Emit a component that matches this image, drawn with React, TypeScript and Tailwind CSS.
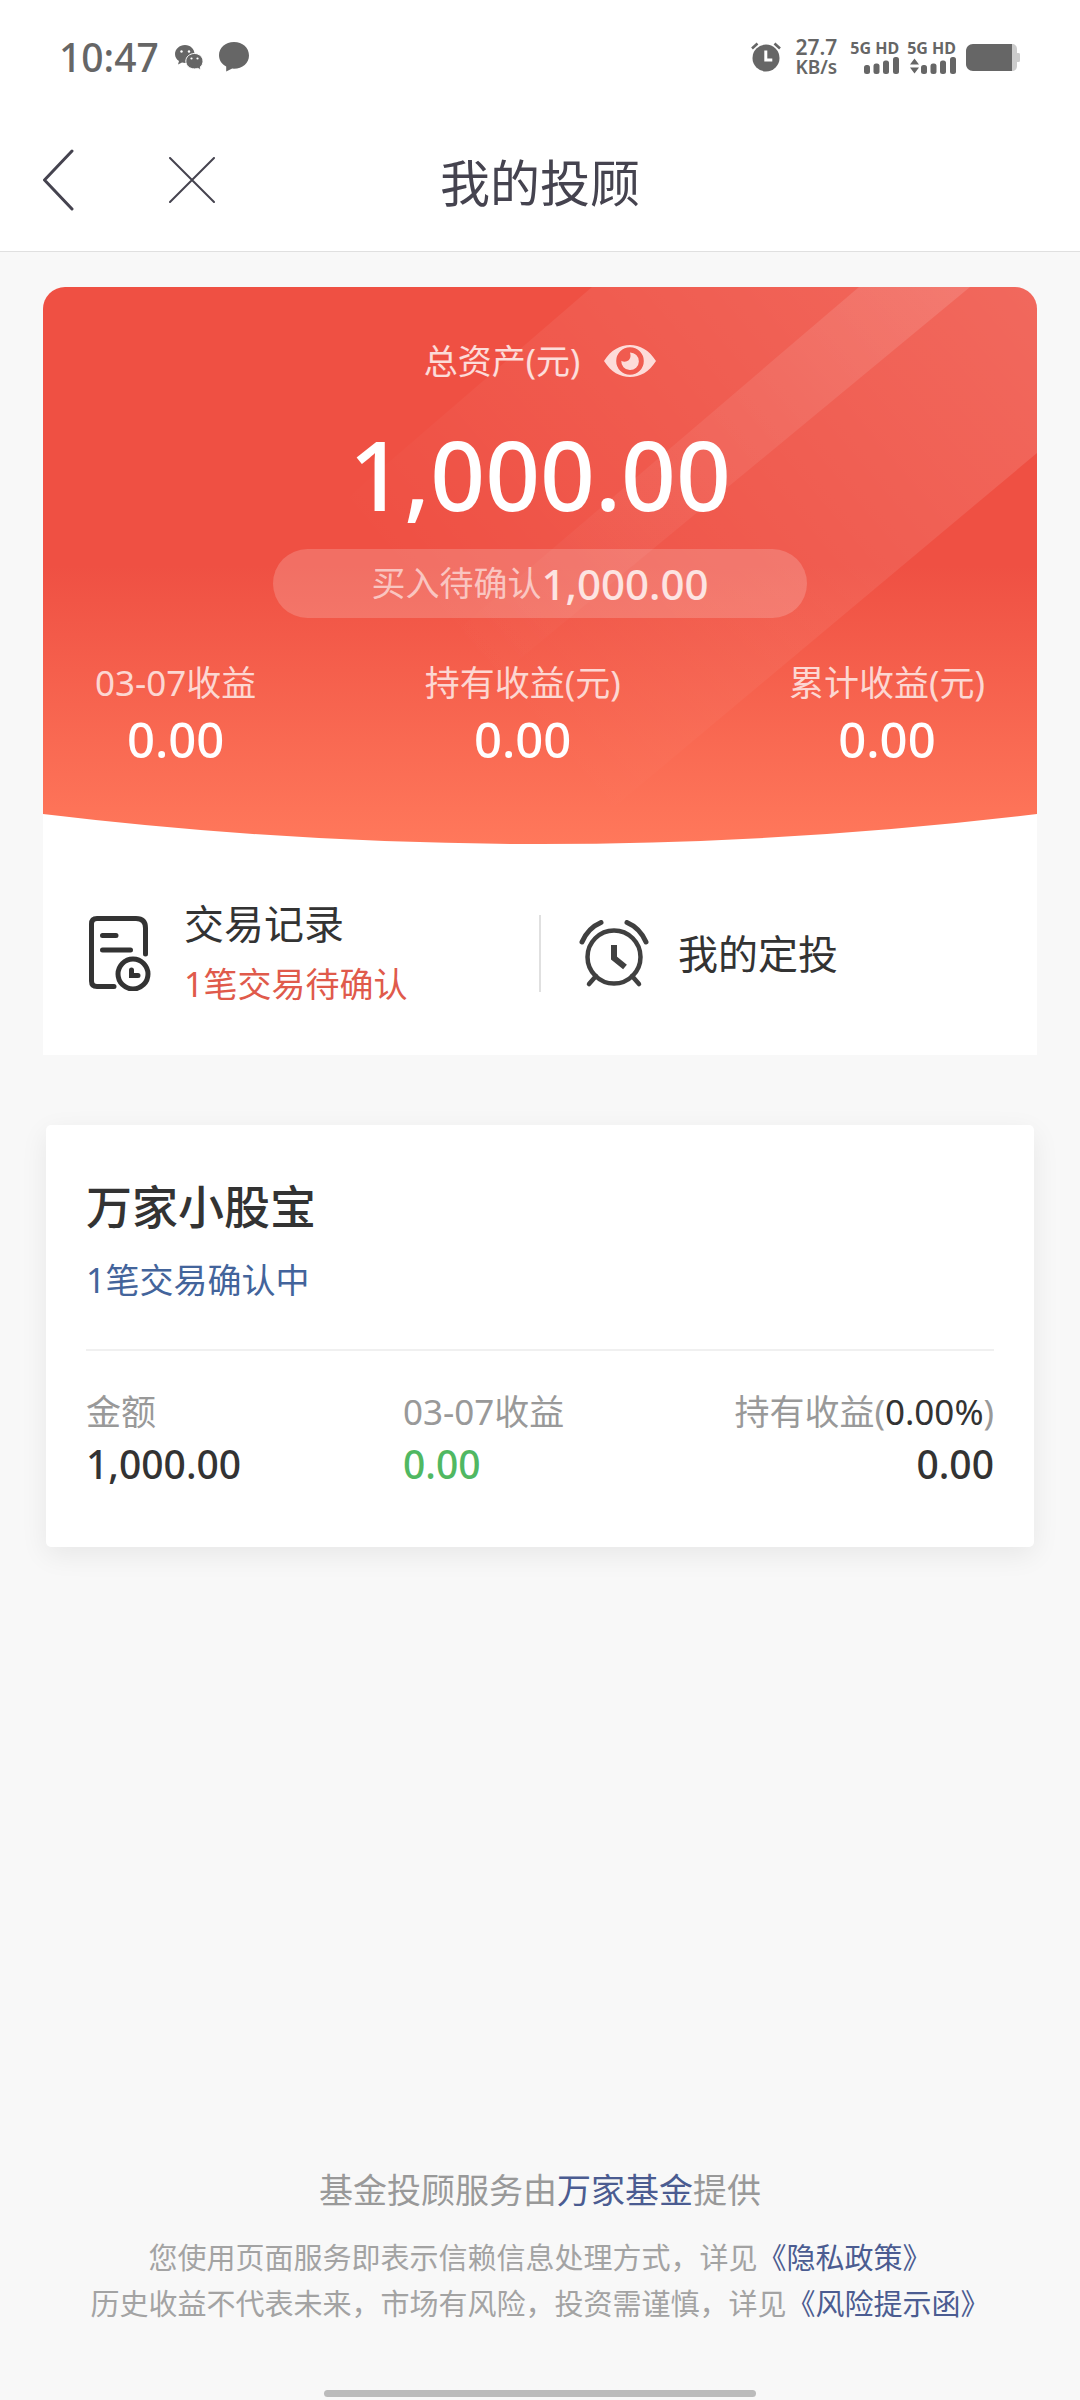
import type { ReactNode } from "react";

interface Stat {
  label: string;
  value: string;
}

const SUMMARY: Stat[] = [
  { label: "03-07收益", value: "0.00" },
  { label: "持有收益(元)", value: "0.00" },
  { label: "累计收益(元)", value: "0.00" },
];

function WechatIcon() {
  return (
    <svg className="ml-4 h-[25px] w-7" viewBox="0 0 28 25" aria-hidden="true">
      <path
        d="M10 0C4.500 0 0 4 0 9c0 3 1.500 5.500 4 7l-1 3.500 4-2c1 .3 2 .4 3 .4C15.500 18 19.500 14 19.500 9S15.500 0 10 0z"
        fill="#666"
      />
      <path
        d="M19.500 8.500c-5 0-8.700 3.400-8.700 7.700s3.700 7.700 8.700 7.700c1.200 0 2.200-.2 3.200-.5l3.300 1.500-.7-2.900c1.700-1.400 2.700-3.500 2.700-5.800 0-4.300-3.700-7.700-8.500-7.700z"
        fill="#666"
        stroke="#fff"
        strokeWidth="1"
      />
      <g fill="#fff">
        <circle cx="6.500" cy="6.500" r="1.200" />
        <circle cx="14" cy="6.500" r="1.200" />
        <circle cx="16.500" cy="13.500" r="1.100" />
        <circle cx="22.500" cy="13.500" r="1.100" />
      </g>
    </svg>
  );
}

function BubbleIcon() {
  return (
    <svg className="ml-4 h-[30px] w-[30px]" viewBox="0 0 30 30" aria-hidden="true">
      <path
        d="M15 0C6.500 0 0 5.700 0 13.300c0 5 2.800 9 7.200 11.300V29.500l6-2.900 1.800.1c8.500 0 15-5.700 15-13.300S23.500 0 15 0z"
        fill="#666"
      />
    </svg>
  );
}

function SmallAlarmIcon() {
  return (
    <svg className="h-[30px] w-[30px]" viewBox="0 0 30 30" aria-hidden="true">
      <circle cx="15" cy="16" r="13.500" fill="#666" />
      <path d="M1 6.500L6.500 1.500M29 6.500L23.500 1.500" stroke="#666" strokeWidth="2.600" />
      <path d="M14.800 8.500v9.500h6.500" fill="none" stroke="#fff" strokeWidth="3" />
    </svg>
  );
}

function Signal({ arrows = false }: { arrows?: boolean }) {
  return (
    <div className="flex flex-col items-end">
      <span className="text-[16px] leading-[17px] font-bold">5G HD</span>
      <svg className="h-[17px] w-[47px]" viewBox="0 0 47 17" fill="#666" aria-hidden="true">
        {arrows && <path d="M1 7.500L5.500 1.500 10 7.500zM1 10.500h9L5.500 16.500z" />}
        <rect x="12" y="8" width="6" height="9" rx="2.500" />
        <rect x="21.500" y="6.500" width="6" height="10.500" rx="2.500" />
        <rect x="31" y="3.500" width="6" height="13.500" rx="2.500" />
        <rect x="41" y="0" width="6" height="17" rx="2.500" />
      </svg>
    </div>
  );
}

function BatteryIcon() {
  return (
    <svg className="ml-[10px] h-[27px] w-[54px]" viewBox="0 0 54 27" aria-hidden="true">
      <path d="M46 0c3 0 5 2 5 5v4h1.500c1 0 1.500.7 1.500 1.500v6c0 .8-.5 1.500-1.500 1.500H51v4c0 3-2 5-5 5z" fill="#ccc" />
      <path d="M46 0v27H7c-4 0-7-3-7-7V7c0-4 3-7 7-7z" fill="#666" />
    </svg>
  );
}

function StatusBar() {
  return (
    <div className="flex h-[114px] items-center pr-[60px] pl-[59px] text-[#666]">
      <span className="text-[39px] leading-[48px] font-medium">10:47</span>
      <WechatIcon />
      <BubbleIcon />
      <div className="ml-auto flex items-center">
        <SmallAlarmIcon />
        <div className="ml-[14px] flex flex-col">
          <span className="text-[21px] leading-[20px] font-semibold">27.7</span>
          <span className="text-[19px] leading-[20px] font-semibold">KB/s</span>
        </div>
        <div className="ml-[13px] flex gap-[8px]">
          <Signal />
          <Signal arrows />
        </div>
        <BatteryIcon />
      </div>
    </div>
  );
}

function NavBar() {
  return (
    <header className="grid h-[138px] grid-cols-[1fr_auto_1fr] items-center border-b border-[#e0e0e0]">
      <div className="flex items-center gap-[95px] pb-[6px] pl-[42px]">
        <button type="button" aria-label="返回">
          <svg className="h-[62px] w-8" viewBox="0 0 32 62" fill="none" stroke="#45434f" strokeWidth="3" strokeLinecap="round" strokeLinejoin="round">
            <path d="M30 2L2.500 31 30 60" />
          </svg>
        </button>
        <button type="button" aria-label="关闭">
          <svg className="h-[46px] w-[46px]" viewBox="0 0 46 46" fill="none" stroke="#45434f" strokeWidth="2" strokeLinecap="round">
            <path d="M1 1l44 44M45 1L1 45" />
          </svg>
        </button>
      </div>
      <h1 className="text-[50px] leading-[64px] text-[#45434f]">我的投顾</h1>
    </header>
  );
}

// Red backdrop: vertical gradient, two light beams and a curved lower edge
function AssetBackdrop() {
  return (
    <svg
      className="absolute inset-0 h-full w-full"
      viewBox="0 0 994 557"
      preserveAspectRatio="none"
      aria-hidden="true"
    >
      <defs>
        <linearGradient id="base" x1="0" y1="0" x2="0" y2="1">
          <stop offset="0.500" stopColor="#ef5043" />
          <stop offset="1" stopColor="#ff785b" />
        </linearGradient>
        <linearGradient id="beam" gradientUnits="userSpaceOnUse" x1="994" y1="0" x2="480" y2="436">
          <stop offset="0" stopColor="#fff" stopOpacity="0.140" />
          <stop offset="1" stopColor="#fff" stopOpacity="0" />
        </linearGradient>
        <clipPath id="curve">
          <path d="M0 0H994V527Q497 587 0 527z" />
        </clipPath>
      </defs>
      <g clipPath="url(#curve)">
        <rect width="994" height="557" fill="url(#base)" />
        <path d="M549 0H994V166L527 557H-97z" fill="url(#beam)" />
        <path d="M816 0H927L253 557H164z" fill="url(#beam)" />
      </g>
    </svg>
  );
}

function EyeIcon() {
  return (
    <svg className="h-8 w-[52px]" viewBox="0 0 52 32" aria-hidden="true">
      <path
        fillRule="evenodd"
        d="M0 16C7 5 16 0 26 0s19 5 26 16C45 27 36 32 26 32S7 27 0 16zM26 2.200a13.800 13.800 0 1 0 0 27.600 13.800 13.800 0 0 0 0-27.600z"
        fill="#fddcd9"
      />
      <path d="M26 7.500a8.800 8.800 0 1 1-8.700 8.200c1.500 1 3.500 1.300 5.500.6 3-1 4.600-4.200 3.200-8.800z" fill="#fddcd9" />
    </svg>
  );
}

function AssetPanel() {
  return (
    <div className="relative">
      <AssetBackdrop />
      <div className="relative flex flex-col items-center pt-[50px] pb-[77px] text-white">
        <div className="flex items-center gap-6 text-[34px] leading-[48px] text-white/80">
          <span>总资产(元)</span>
          <button type="button" aria-label="隐藏金额">
            <EyeIcon />
          </button>
        </div>
        <p className="mt-[34px] text-[96px] leading-[110px] font-medium">1,000.00</p>
        <button
          type="button"
          className="mt-[20px] flex h-[69px] w-[534px] items-center justify-center rounded-full bg-white/18"
        >
          <span className="text-[34px] text-white/60">买入待确认</span>
          <span className="text-[42px] font-medium text-white/80">1,000.00</span>
        </button>
        <div className="mt-[41px] flex w-full justify-between px-[52px]">
          {SUMMARY.map((item) => (
            <div key={item.label} className="text-center">
              <p className="text-[35px] leading-[48px] text-white/75">{item.label}</p>
              <p className="mt-1 text-[49px] leading-[56px] font-medium">{item.value}</p>
            </div>
          ))}
        </div>
      </div>
    </div>
  );
}

function RecordIcon() {
  return (
    <svg className="h-[75px] w-[62px]" viewBox="0 0 62 75" fill="none" stroke="#333" strokeWidth="5" strokeLinecap="round" aria-hidden="true">
      <path d="M25 70.500H8Q2.500 70.500 2.500 65V8Q2.500 2.500 8 2.500H47Q56.500 2.500 56.500 12V38" />
      <path d="M13.500 19.500H27M13.500 34H41.500" />
      <circle cx="44" cy="58" r="15" />
      <path d="M42.500 54v5.500H49" />
    </svg>
  );
}

function AlarmIcon() {
  return (
    <svg className="h-[68px] w-[70px]" viewBox="0 0 70 68" fill="none" stroke="#404040" strokeWidth="4.500" strokeLinecap="round" aria-hidden="true">
      <circle cx="35" cy="37" r="26.500" />
      <path d="M35 25v13l11 9" strokeWidth="6" strokeLinecap="butt" />
      <path d="M3 22Q9 8 22 2.500M67 22Q61 8 48 2.500" strokeWidth="5" />
      <path d="M17 56l-7 8M53 56l7 8" />
    </svg>
  );
}

function ActionRow() {
  return (
    <div className="grid grid-cols-[1fr_2px_1fr] items-center pt-2">
      <button type="button" className="flex h-[203px] items-center gap-[33px] pl-[46px] text-left">
        <RecordIcon />
        <span className="flex flex-col leading-[60px]">
          <span className="text-[40px] text-[#333]">交易记录</span>
          <span className="text-[34px] text-[#e05a4b]">1笔交易待确认</span>
        </span>
      </button>
      <div className="h-[77px] bg-[#e0e0e0]" />
      <button type="button" className="flex h-[203px] items-center gap-[29px] pl-[38px] text-left">
        <AlarmIcon />
        <span className="text-[40px] leading-[60px] text-[#333]">我的定投</span>
      </button>
    </div>
  );
}

function HoldingCard() {
  return (
    <section className="mx-[46px] mt-[70px] rounded-[5px] bg-white px-10 pt-[51px] pb-[55px] shadow-[0_8px_28px_rgba(0,0,0,0.07)]">
      <h2 className="text-[46px] leading-[60px] font-medium text-[#333]">万家小股宝</h2>
      <p className="mt-5 text-[34px] leading-[48px] text-[#43649b]">1笔交易确认中</p>
      <div className="mt-[45px] grid grid-cols-[317px_1fr_auto] border-t-2 border-[#f0f0f0] pt-[37px]">
        <HoldingStat label="金额">
          <span className="text-[#333]">1,000.00</span>
        </HoldingStat>
        <HoldingStat label="03-07收益">
          <span className="text-[#50b862]">0.00</span>
        </HoldingStat>
        <div className="text-right">
          <HoldingStat
            label={
              <>
                持有收益(<span className="text-[#333]">0.00%</span>)
              </>
            }
          >
            <span className="text-[#333]">0.00</span>
          </HoldingStat>
        </div>
      </div>
    </section>
  );
}

function HoldingStat({ label, children }: { label: ReactNode; children: ReactNode }) {
  return (
    <div>
      <p className="text-[35px] leading-[48px] text-[#999]">{label}</p>
      <p className="text-[39px] leading-[56px] font-medium">{children}</p>
    </div>
  );
}

function Footer() {
  return (
    <footer className="mt-auto flex flex-col items-center pb-[3px] text-center">
      <p className="text-[34px] leading-[48px] text-[#999]">
        基金投顾服务由
        <a href="#fund" className="text-[#4b5c91]">
          万家基金
        </a>
        提供
      </p>
      <div className="mt-[21px] text-[29px] leading-[46px] text-[#a3a3a3]">
        <p>
          您使用页面服务即表示信赖信息处理方式，详见
          <a href="#privacy" className="text-[#4b5c91]">
            《隐私政策》
          </a>
        </p>
        <p>
          历史收益不代表未来，市场有风险，投资需谨慎，详见
          <a href="#risk" className="text-[#4b5c91]">
            《风险提示函》
          </a>
        </p>
      </div>
      <div className="mt-[63px] h-[7px] w-2/5 rounded-full bg-[#bbb]" />
    </footer>
  );
}

export default function App() {
  return (
    <div
      lang="zh-CN"
      className="flex min-h-screen flex-col bg-[#f8f8f8] font-['Noto_Sans','Noto_Sans_CJK_SC',sans-serif]"
    >
      <div className="bg-white">
        <StatusBar />
        <NavBar />
      </div>
      <main>
        <section className="mx-[43px] mt-[35px] overflow-hidden rounded-t-[22px] bg-white">
          <AssetPanel />
          <ActionRow />
        </section>
        <HoldingCard />
      </main>
      <Footer />
    </div>
  );
}
